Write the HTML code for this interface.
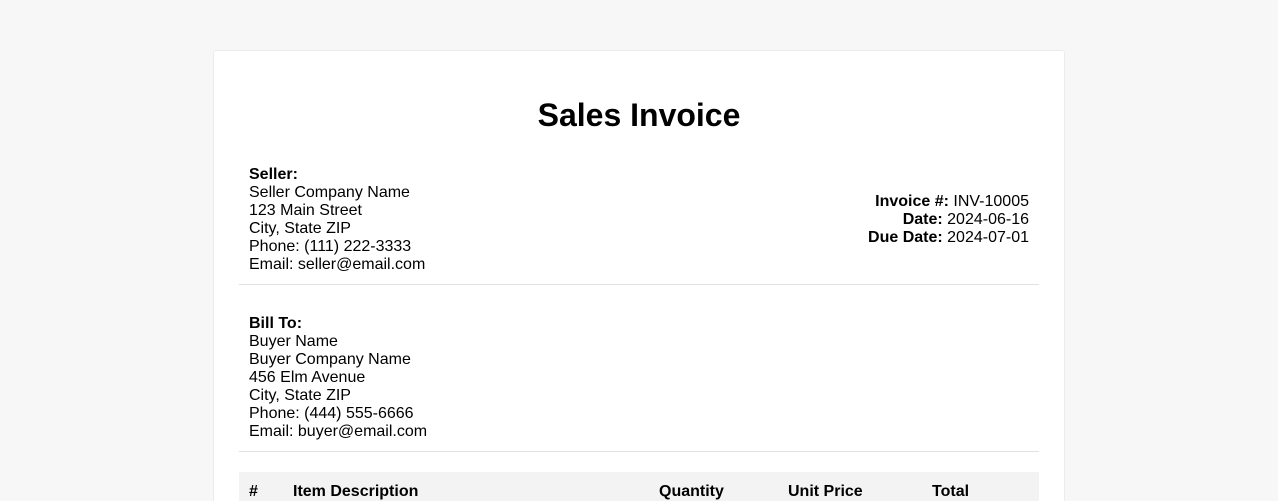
<!DOCTYPE html>
<html><head><style>
html,body{margin:0;width:1278px;height:501px;overflow:hidden}
body{background:#f7f7f7;font-family:"Liberation Sans",Arial,sans-serif;font-size:16px;color:#000;position:relative}
.card{position:absolute;left:213px;top:50px;width:850px;height:470px;background:#fff;border:1px solid #ececec;border-radius:3px}
h1{position:absolute;width:850px;top:95px;margin:0;text-align:center;font-size:32px;line-height:40px;font-weight:bold}
.blk{position:absolute;line-height:18px}
.hr{position:absolute;left:239px;width:800px;height:1px;background:#e2e2e2}
.th{position:absolute;left:239px;top:472px;width:800px;height:40px;background:#f3f3f3}
.th span{position:absolute;top:11px;font-weight:bold;line-height:18px}
</style></head><body>
<div class="card"></div>
<h1 style="left:214px">Sales Invoice</h1>
<div class="blk" style="left:249px;top:166px"><b>Seller:</b><br>Seller Company Name<br>123 Main Street<br>City, State ZIP<br>Phone: (111) 222-3333<br>Email: seller@email.com</div>
<div class="blk" style="right:249px;top:193px;text-align:right"><b>Invoice #:</b> INV-10005<br><b>Date:</b> 2024-06-16<br><b>Due Date:</b> 2024-07-01</div>
<div class="hr" style="top:284px"></div>
<div class="blk" style="left:249px;top:315px"><b>Bill To:</b><br>Buyer Name<br>Buyer Company Name<br>456 Elm Avenue<br>City, State ZIP<br>Phone: (444) 555-6666<br>Email: buyer@email.com</div>
<div class="hr" style="top:451px"></div>
<div class="th"><span style="left:10px">#</span><span style="left:54px">Item Description</span><span style="left:420px">Quantity</span><span style="left:549px">Unit Price</span><span style="left:693px">Total</span></div>
</body></html>
